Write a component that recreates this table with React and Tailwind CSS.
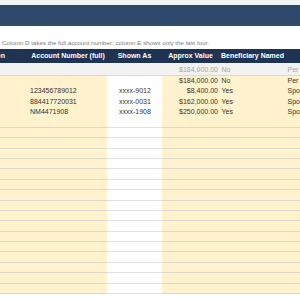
import React from 'react';

const cols = 'grid grid-cols-[82px_78px_55px_57px_67px_80px]';

const rows = [
  { account: '', shown: '', value: '$184,000.00', named: 'No', note: 'Per' },
  { account: '123456789012', shown: 'xxxx-9012', value: '$8,400.00', named: 'Yes', note: 'Spo' },
  { account: '884417720031', shown: 'xxxx-0031', value: '$162,000.00', named: 'Yes', note: 'Spo' },
  { account: 'NM4471908', shown: 'xxxx-1908', value: '$250,000.00', named: 'Yes', note: 'Spo' },
];

const App = () => {
  const blanks = Array.from({ length: 21 - rows.length });

  return (
    <div className="w-[300px] h-[300px] overflow-hidden bg-white font-['Liberation_Sans',Arial,sans-serif]">
      {/* Top bar */}
      <div className="h-[5px] bg-[#f3f4f6]" />
      <div className="h-[21px] bg-[#2d4a6c]" />

      {/* Note */}
      <div className="h-[23px] flex items-end pb-[3px] pl-[2px] text-[6.2px] leading-[7px] text-[#7a7a7a] whitespace-nowrap">
        Column D takes the full account number; column E shows only the last four.
      </div>

      {/* Sheet */}
      <div className="overflow-hidden">
        <div className="-ml-[53px] w-max">
          {/* Header */}
          <div className={`${cols} h-[14px] bg-[#1f3352] text-white font-bold text-[7px] whitespace-nowrap`}>
            <div className="flex items-center justify-center">Institution</div>
            <div className="flex items-center justify-center">Account Number (full)</div>
            <div className="flex items-center justify-center">Shown As</div>
            <div className="flex items-center justify-center">Approx Value</div>
            <div className="flex items-center justify-center">Beneficiary Named</div>
            <div className="flex items-center justify-center">Notes</div>
          </div>

          {/* Example row */}
          <div className={`${cols} h-[13px] pt-[2px] bg-[#f2f2f2] border-b border-[#d9d9d9] text-[7px] text-[#a6a6a6] whitespace-nowrap`}>
            <div />
            <div />
            <div />
            <div className="flex items-center justify-end pr-[1px]">$184,000.00</div>
            <div className="flex items-center pl-[2.5px]">No</div>
            <div className="flex items-center pl-[1.5px]">Per</div>
          </div>

          {/* Input rows */}
          {rows.map((r, i) => (
            <div key={i} className={`${cols} h-[10.38px] text-[7px] text-[#333333] whitespace-nowrap`}>
              <div className="bg-[#fff2cc] border-b border-[#dcd8cc]" />
              <div className="bg-[#fff2cc] border-b border-[#dcd8cc] flex items-center pl-[1px]">{r.account}</div>
              <div className="bg-white border-b border-[#dfe1e4] flex items-center pl-[12px]">{r.shown}</div>
              <div className="bg-[#fff2cc] border-b border-[#dcd8cc] flex items-center justify-end pr-[1px]">{r.value}</div>
              <div className="bg-[#fff2cc] border-b border-[#dcd8cc] flex items-center pl-[2.5px]">{r.named}</div>
              <div className="bg-[#fff2cc] border-b border-[#dcd8cc] flex items-center pl-[1.5px]">{r.note}</div>
            </div>
          ))}
          {blanks.map((_, i) => (
            <div key={`b${i}`} className={`${cols} h-[10.38px]`}>
              <div className="bg-[#fff2cc] border-b border-[#dcd8cc]" />
              <div className="bg-[#fff2cc] border-b border-[#dcd8cc]" />
              <div className="bg-white border-b border-[#dfe1e4]" />
              <div className="bg-[#fff2cc] border-b border-[#dcd8cc]" />
              <div className="bg-[#fff2cc] border-b border-[#dcd8cc]" />
              <div className="bg-[#fff2cc] border-b border-[#dcd8cc]" />
            </div>
          ))}
        </div>
      </div>
    </div>
  );
};

export default App;
